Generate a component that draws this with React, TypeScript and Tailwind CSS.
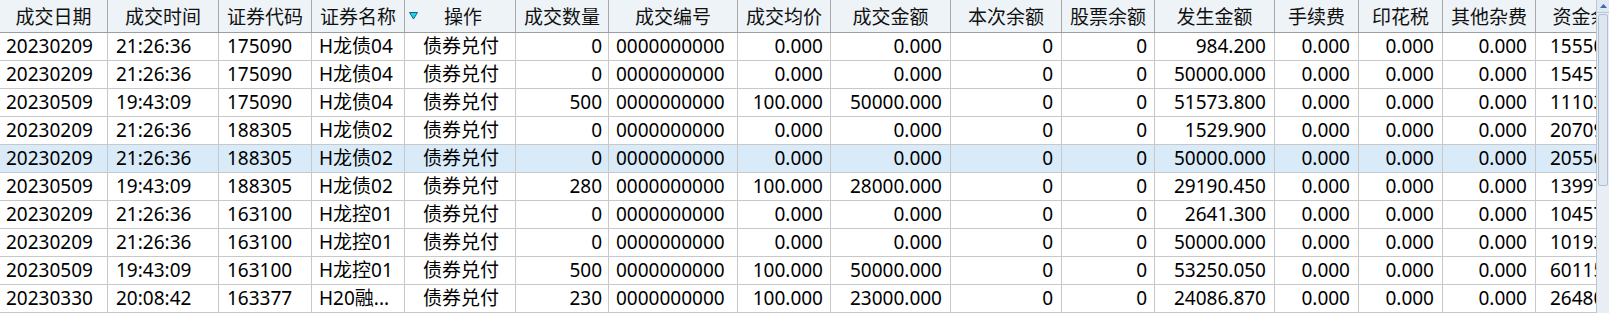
import React from "react";

type Col = { title: string; w: string; align: "l" | "c" | "r"; pad: string };

const cols: Col[] = [
  { title: "成交日期", w: "w-[108px]", align: "l", pad: "pl-[6px]" },
  { title: "成交时间", w: "w-[111px]", align: "l", pad: "pl-[8px]" },
  { title: "证券代码", w: "w-[93px]", align: "l", pad: "pl-[8px]" },
  { title: "证券名称", w: "w-[93px]", align: "l", pad: "pl-[7px]" },
  { title: "操作", w: "w-[111px]", align: "c", pad: "pl-[2px]" },
  { title: "成交数量", w: "w-[93px]", align: "r", pad: "pr-[6px]" },
  { title: "成交编号", w: "w-[129px]", align: "l", pad: "pl-[7px]" },
  { title: "成交均价", w: "w-[93px]", align: "r", pad: "pr-[7px]" },
  { title: "成交金额", w: "w-[120px]", align: "r", pad: "pr-[8px]" },
  { title: "本次余额", w: "w-[111px]", align: "r", pad: "pr-[8px]" },
  { title: "股票余额", w: "w-[93px]", align: "r", pad: "pr-[7px]" },
  { title: "发生金额", w: "w-[120px]", align: "r", pad: "pr-[8px]" },
  { title: "手续费", w: "w-[84px]", align: "r", pad: "pr-[8px]" },
  { title: "印花税", w: "w-[84px]", align: "r", pad: "pr-[8px]" },
  { title: "其他杂费", w: "w-[93px]", align: "r", pad: "pr-[8px]" },
  { title: "资金余额", w: "w-[110px]", align: "l", pad: "pl-[14px]" },
];

const rows: string[][] = [
  ["20230209", "21:26:36", "175090", "H龙债04", "债券兑付", "0", "0000000000", "0.000", "0.000", "0", "0", "984.200", "0.000", "0.000", "0.000", "15550.530"],
  ["20230209", "21:26:36", "175090", "H龙债04", "债券兑付", "0", "0000000000", "0.000", "0.000", "0", "0", "50000.000", "0.000", "0.000", "0.000", "15457.330"],
  ["20230509", "19:43:09", "175090", "H龙债04", "债券兑付", "500", "0000000000", "100.000", "50000.000", "0", "0", "51573.800", "0.000", "0.000", "0.000", "11103.130"],
  ["20230209", "21:26:36", "188305", "H龙债02", "债券兑付", "0", "0000000000", "0.000", "0.000", "0", "0", "1529.900", "0.000", "0.000", "0.000", "20709.430"],
  ["20230209", "21:26:36", "188305", "H龙债02", "债券兑付", "0", "0000000000", "0.000", "0.000", "0", "0", "50000.000", "0.000", "0.000", "0.000", "20556.430"],
  ["20230509", "19:43:09", "188305", "H龙债02", "债券兑付", "280", "0000000000", "100.000", "28000.000", "0", "0", "29190.450", "0.000", "0.000", "0.000", "13997.880"],
  ["20230209", "21:26:36", "163100", "H龙控01", "债券兑付", "0", "0000000000", "0.000", "0.000", "0", "0", "2641.300", "0.000", "0.000", "0.000", "10457.330"],
  ["20230209", "21:26:36", "163100", "H龙控01", "债券兑付", "0", "0000000000", "0.000", "0.000", "0", "0", "50000.000", "0.000", "0.000", "0.000", "10193.130"],
  ["20230509", "19:43:09", "163100", "H龙控01", "债券兑付", "500", "0000000000", "100.000", "50000.000", "0", "0", "53250.050", "0.000", "0.000", "0.000", "60115.180"],
  ["20230330", "20:08:42", "163377", "H20融...", "债券兑付", "230", "0000000000", "100.000", "23000.000", "0", "0", "24086.870", "0.000", "0.000", "0.000", "26480.050"],
];

function alignCls(a: Col["align"]) {
  if (a === "l") return "justify-start";
  if (a === "c") return "justify-center";
  return "justify-end";
}

function Triangle() {
  return (
    <svg width="9" height="8" viewBox="0 0 9 8" className="absolute left-[4px] top-[12px]">
      <polygon points="0.5,0.5 8.5,0.5 4.5,7" fill="#12d9ee" stroke="#1b5e86" strokeWidth="1" />
    </svg>
  );
}

export default function App() {
  return (
    <div className="w-[1609px] h-[313px] overflow-hidden bg-white flex font-['Noto_Sans','Noto_Sans_CJK_SC',sans-serif] text-[19px] text-black">
      <div className="flex-1 overflow-hidden">
        <div className="flex h-[33px] bg-[#eef3f7] border-b border-[#9e9e9e] w-max">
          {cols.map((c, i) => (
            <div
              key={i}
              className={`${c.w} shrink-0 relative flex items-center justify-center pt-[2px] border-r border-[#a8a8a8] text-[#111] whitespace-nowrap overflow-hidden`}
            >
              {i === 4 && <Triangle />}
              <span className={i === 4 ? "pl-[6px]" : ""}>{c.title}</span>
            </div>
          ))}
        </div>
        {rows.map((r, ri) => (
          <div
            key={ri}
            className={`flex h-[28px] border-b border-[#c8c8c8] w-max ${ri === 4 ? "bg-[#d9ebf9]" : "bg-white"}`}
          >
            {r.map((v, ci) => {
              const c = cols[ci];
              return (
                <div
                  key={ci}
                  className={`${c.w} shrink-0 flex items-center ${alignCls(c.align)} ${c.pad} border-r border-[#c8c8c8] whitespace-nowrap overflow-hidden leading-none`}
                >
                  {v}
                </div>
              );
            })}
          </div>
        ))}
      </div>
      <div className="w-[13px] shrink-0 h-full bg-[#e9eef5] border-l border-[#b9c6d6] flex flex-col">
        <div className="h-[13px] bg-[#dfe8f3] border-b border-[#b9c6d6] flex items-center justify-center">
          <svg width="7" height="4" viewBox="0 0 7 4">
            <polygon points="0,4 7,4 3.5,0" fill="#3d6aa8" />
          </svg>
        </div>
        <div className="h-[172px] mx-[1px] mt-[1px] bg-[#dde6f1] border border-[#b0bfd2] rounded-[2px]" />
        <div className="flex-1" />
      </div>
    </div>
  );
}
